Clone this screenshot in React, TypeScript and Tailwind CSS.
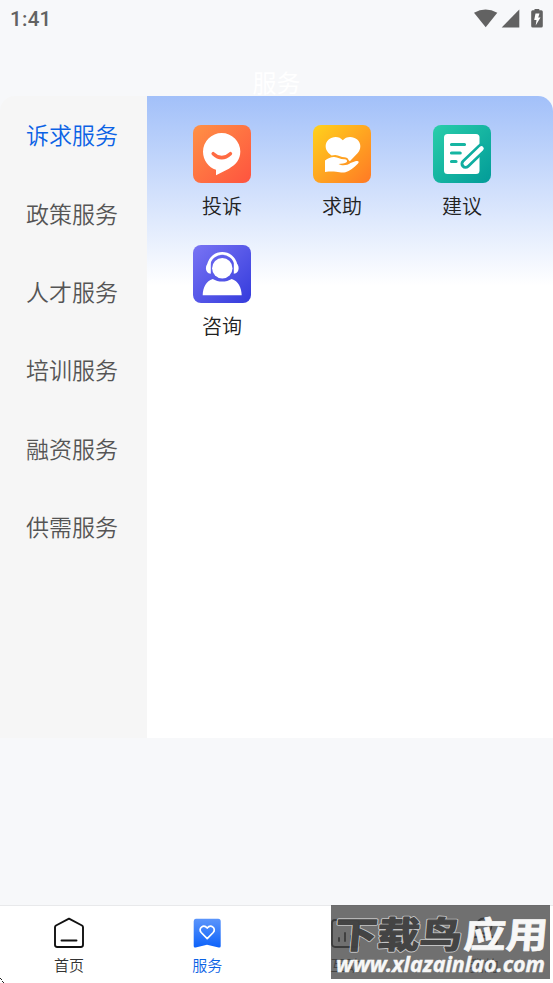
import React, { useState } from 'react';

interface Service {
  label: string;
  icon: React.ReactNode;
}

const categories = ['诉求服务', '政策服务', '人才服务', '培训服务', '融资服务', '供需服务'];

const ComplaintIcon = () => (
  <svg width="58" height="58" viewBox="0 0 58 58">
    <defs>
      <linearGradient id="complaint" x1="0" y1="0" x2="1" y2="1">
        <stop offset="0" stopColor="#ff9145" />
        <stop offset="1" stopColor="#fe533f" />
      </linearGradient>
    </defs>
    <rect width="58" height="58" rx="8" fill="url(#complaint)" />
    <path d="M28.700 8a18.600 18.600 0 0 1 18.600 18.600c0 8-4.600 13.300-11.400 17.100L23 50.300v-5.500C15.500 42.500 10 35 10 26.700A18.700 18.700 0 0 1 28.700 8z" fill="#fff" />
    <path d="M20.200 28.700q8.500 8 17.200 0" fill="none" stroke="#ff6b43" strokeWidth="3.500" strokeLinecap="round" />
  </svg>
);

const HelpIcon = () => (
  <svg width="58" height="58" viewBox="0 0 58 58">
    <defs>
      <linearGradient id="help" x1="0" y1="0" x2="1" y2="1">
        <stop offset="0" stopColor="#ffd21c" />
        <stop offset="1" stopColor="#ff7925" />
      </linearGradient>
    </defs>
    <rect width="58" height="58" rx="8" fill="url(#help)" />
    <path d="M29.800 15.300C33 11 40 10.800 44.200 14.500c4.300 4 4 9.700.3 13.700L36.800 36.300 35.500 35c-.5-1.700-2-2.500-4-2.700-3.500 0-5.500-2-9.300-2.200L18.500 30.500l-3-2.500c-3.800-4-3.800-9.700.2-13.400 4-3.700 11-3.600 14.100.7z" fill="#fff" />
    <path d="M12 35.500c3-2.300 6.300-3.700 9.300-3.500 3.700.2 6 2.300 9.700 2.300 2.800 0 3.800 1.500 2.500 3-1.500 1.500-5 1.300-8 1.700 4 2.300 9 1.200 12-1l5.500-1.900c2.500-.6 3.500.6 2 2.400C41 42.500 36.500 46.300 32.500 47.200c-3.500.8-6-.2-9.500-.5-4-.3-7-.2-11 .3z" fill="#fff" />
  </svg>
);

const AdviceIcon = () => (
  <svg width="58" height="58" viewBox="0 0 58 58">
    <defs>
      <linearGradient id="advice" x1="0" y1="0" x2="1" y2="1">
        <stop offset="0" stopColor="#29ceaa" />
        <stop offset="1" stopColor="#029b98" />
      </linearGradient>
    </defs>
    <rect width="58" height="58" rx="8" fill="url(#advice)" />
    <rect x="11" y="9" width="35.500" height="40" rx="3.500" fill="#fff" />
    <path d="M18.500 19.500h13M18.500 28h8.700M18.500 36.500h4.500" stroke="#15b5a2" strokeWidth="3.200" strokeLinecap="round" />
    <path d="M48.500 23.500L32.500 38.800" stroke="#0fada0" strokeWidth="10" strokeLinecap="round" />
    <path d="M48.500 23.500L32.700 38.600" stroke="#fff" strokeWidth="4.500" strokeLinecap="round" />
  </svg>
);

const ConsultIcon = () => (
  <svg width="58" height="58" viewBox="0 0 58 58">
    <defs>
      <linearGradient id="consult" x1="0" y1="0" x2="1" y2="1">
        <stop offset="0" stopColor="#7974f4" />
        <stop offset="1" stopColor="#343bdc" />
      </linearGradient>
    </defs>
    <rect width="58" height="58" rx="8" fill="url(#consult)" />
    <circle cx="29.300" cy="23.200" r="10.200" fill="#fff" />
    <path d="M15.500 20C18.500 4.500 40 4.500 43 20" fill="none" stroke="#fff" strokeWidth="2.800" />
    <path d="M17.800 16.700v12c-6.500-.5-6.500-10.500 0-12zM40.800 16.700v12c6.500-.5 6.500-10.500 0-12z" fill="#fff" />
    <path d="M9.700 50.300c.2-7.500 3.500-14.500 10-16.300 5.500 3.400 13.500 3.400 19 0 6.500 1.800 9.800 8.800 10 16.300z" fill="#fff" />
  </svg>
);

const services: Service[] = [
  { label: '投诉', icon: <ComplaintIcon /> },
  { label: '求助', icon: <HelpIcon /> },
  { label: '建议', icon: <AdviceIcon /> },
  { label: '咨询', icon: <ConsultIcon /> },
];

const tabs: Service[] = [
  {
    label: '首页',
    icon: (
      <svg width="32" height="32" viewBox="0 0 32 32" fill="none" stroke="#111" strokeWidth="1.900" strokeLinejoin="round" strokeLinecap="round">
        <path d="M16 1.700L29 8.500q1 .6 1 1.700v17.600q0 2.200-2.200 2.200H4.200Q2 30 2 27.800V10.200q0-1.100 1-1.700z" />
        <path d="M8.500 23.500h15" />
      </svg>
    ),
  },
  {
    label: '服务',
    icon: (
      <svg width="32" height="32" viewBox="0 0 32 32">
        <defs>
          <linearGradient id="tab" x1="0" y1="0" x2="0" y2="1">
            <stop offset="0" stopColor="#5b95fb" />
            <stop offset="1" stopColor="#0d62fa" />
          </linearGradient>
        </defs>
        <path d="M4.800 1.700h22.400q2.500 0 2.500 2.500v24.800q0 2-2 1.500L16 27.800 4.700 30.500q-2 .5-2-1.500V4.200q0-2.500 2.100-2.500z" fill="url(#tab)" />
        <path d="M16.200 21.700l-6-6.200c-3.500-4 2.300-9 6-4.500 3.700-4.500 9.500.5 6 4.500z" fill="none" stroke="#fff" strokeWidth="1.700" strokeLinejoin="round" />
      </svg>
    ),
  },
  {
    label: '互动',
    icon: (
      <svg width="32" height="32" viewBox="0 0 32 32" fill="none" stroke="#111" strokeWidth="1.800" strokeLinecap="round">
        <rect x="2" y="3" width="27" height="27" rx="3" />
        <path d="M9 21v3M15 16v8M21 19v5" />
      </svg>
    ),
  },
  {
    label: '我的',
    icon: (
      <svg width="32" height="32" viewBox="0 0 32 32" fill="none" stroke="#111" strokeWidth="1.800">
        <circle cx="16" cy="9" r="7.500" />
        <rect x="3" y="20" width="26" height="10" rx="5" />
      </svg>
    ),
  },
];

const StatusBar = () => (
  <div className="flex h-9 items-center justify-between pl-[10px] pr-[9px] pt-[2px]">
    <span className="font-[Roboto] text-[20.5px] font-medium tracking-[0.3px] text-[#626262]">1:41</span>
    <svg width="70" height="20" viewBox="0 0 70 20" fill="#626262">
      <path d="M0 3.700Q11.500-2.700 23.300 3.700L11.700 18.200z" />
      <path d="M45.300.5v18H27.700z" />
      <path d="M60.500 0h4.800v1.300h2q1.500 0 1.500 1.500V17q0 1.500-1.500 1.500h-8.600q-1.500 0-1.500-1.500V2.800q0-1.500 1.500-1.500h1.800z" />
      <path d="M61.500 4.500h4l-1.300 4h2.300l-4.800 8 .8-5.500h-2.300z" fill="#fff" />
    </svg>
  </div>
);

const Watermark = () => (
  <div className="absolute left-[331px] top-[905px] h-[74px] w-[219px] bg-[#484848]/78">
    <svg width="219" height="74" viewBox="0 0 219 74" className="font-['Noto_Sans_CJK_SC',sans-serif] font-bold opacity-95">
      <g transform="translate(0 43) skewX(-5) scale(1 .93)" strokeLinejoin="round">
        <text x="3" y="0" fontSize="39" textLength="127" lengthAdjust="spacingAndGlyphs" fill="#424242" stroke="#c8c8c8" strokeWidth="3.300">下载鸟</text>
        <text x="3" y="0" fontSize="39" textLength="127" lengthAdjust="spacingAndGlyphs" fill="#424242" stroke="#424242" strokeWidth="1.400">下载鸟</text>
        <text x="132" y="0" fontSize="39" textLength="84" lengthAdjust="spacingAndGlyphs" fill="#fff" stroke="#fff" strokeWidth=".8">应用</text>
      </g>
      <text x="5" y="67" fontSize="20.500" textLength="209" lengthAdjust="spacingAndGlyphs" fill="#fff" stroke="#fff" strokeWidth=".4" className="font-['Noto_Sans',sans-serif] font-bold italic">www.xlazainlao.com</text>
    </svg>
  </div>
);

const App: React.FC = () => {
  const [category, setCategory] = useState(0);
  const [tab, setTab] = useState(1);

  return (
    <div className="relative flex h-[983px] w-[553px] flex-col overflow-hidden bg-[#f7f8fa] font-['Noto_Sans_CJK_SC',sans-serif] font-[350]">
      <StatusBar />
      <header className="flex h-[60px] items-end justify-center">
        <h1 className="text-[24px] font-normal leading-[28px] text-white">服务</h1>
      </header>

      <main className="flex h-[642px] overflow-hidden rounded-t-[15px]">
        <nav className="flex w-[147px] flex-col bg-[#f6f6f6]">
          {categories.map((name, i) => (
            <button
              key={name}
              onClick={() => setCategory(i)}
              className={`h-[78.4px] pb-[1.4px] pl-[26px] text-left text-[23px] ${i === category ? 'text-[#0b62e5]' : 'text-[#555]'}`}
            >
              {name}
            </button>
          ))}
        </nav>
        <section className="flex-1 bg-white bg-[linear-gradient(180deg,#a2c0f9_0px,#ffffff_190px)] pl-[15px] pt-[29px]">
          <div className="grid w-[360px] grid-cols-3">
            {services.map(s => (
              <div key={s.label} className="flex h-[120px] flex-col items-center">
                {s.icon}
                <span className="mt-2 text-[20px] leading-[30px] text-[#222]">{s.label}</span>
              </div>
            ))}
          </div>
        </section>
      </main>

      <footer className="mt-auto grid h-[78px] grid-cols-4 border-t border-[#e8e9eb] bg-white">
        {tabs.map((t, i) => (
          <button key={t.label} onClick={() => setTab(i)} className="flex flex-col items-center pt-[11px]">
            {t.icon}
            <span className={`mt-[5px] text-[15px] leading-[22px] ${i === tab ? 'text-[#0b62e5]' : 'text-[#333]'}`}>{t.label}</span>
          </button>
        ))}
      </footer>

      <Watermark />
      <svg className="absolute bottom-0 left-0" width="5" height="5" viewBox="0 0 5 5" fill="#222">
        <path d="M0 0h1v1H0zM1 1h1v1H1zM2 3h1v1H2zM3 4h1v1H3z" />
      </svg>
    </div>
  );
};

export default App;
